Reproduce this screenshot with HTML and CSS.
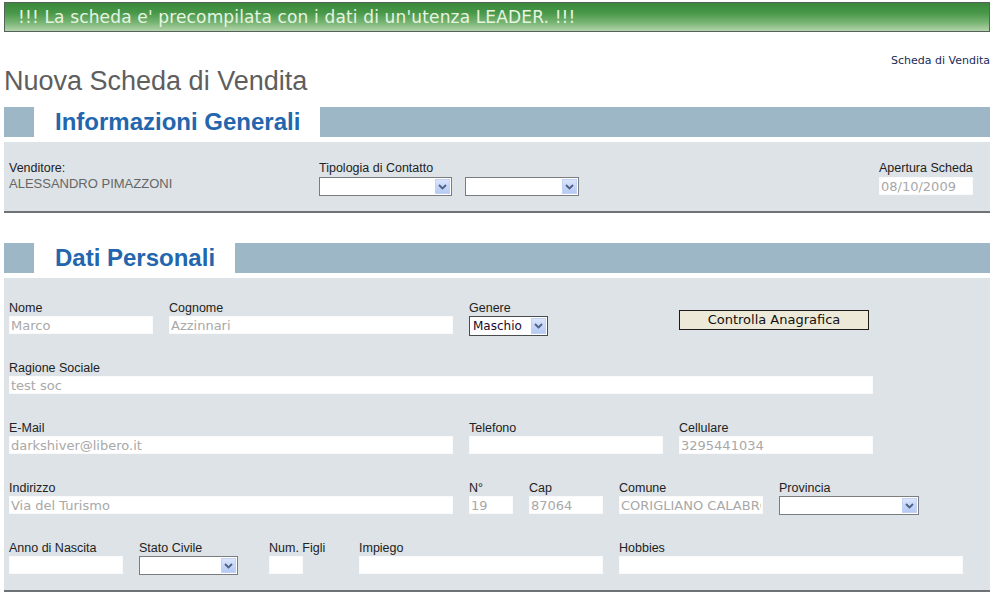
FILE: index.html
```html
<!DOCTYPE html>
<html lang="it">
<head>
<meta charset="utf-8">
<title>Nuova Scheda di Vendita</title>
<link rel="stylesheet" href="styles.css">
</head>
<body>
<div class="page">
  <div class="notice">!!! La scheda e' precompilata con i dati di un'utenza LEADER. !!!</div>
  <div class="crumb"><a class="crumb-link">Scheda di Vendita</a></div>
  <h1 class="page-title">Nuova Scheda di Vendita</h1>

  <section class="section">
    <div class="sec-head"><span class="sec-tab"></span><h2 class="sec-title">Informazioni Generali</h2><span class="sec-fill"></span></div>
    <div class="panel panel-general">
      <div class="gcol gcol-vend">
        <div class="lbl lbl-gen">Venditore:</div>
        <div class="value">ALESSANDRO PIMAZZONI</div>
      </div>
      <div class="gcol gcol-tipo">
        <div class="lbl lbl-gen">Tipologia di Contatto</div>
        <div class="sel-pair">
          <div class="select s132"><span class="sel-val"></span><span class="sel-btn"><svg width="9" height="6" viewBox="0 0 9 6"><path d="M1 1 L4.5 4.5 L8 1" fill="none" stroke="#4d6185" stroke-width="1.8"/></svg></span></div>
          <div class="select s113"><span class="sel-val"></span><span class="sel-btn"><svg width="9" height="6" viewBox="0 0 9 6"><path d="M1 1 L4.5 4.5 L8 1" fill="none" stroke="#4d6185" stroke-width="1.8"/></svg></span></div>
        </div>
      </div>
      <div class="gcol gcol-apert">
        <div class="lbl lbl-gen">Apertura Scheda</div>
        <input class="inp i93" type="text" value="08/10/2009" readonly>
      </div>
    </div>
  </section>

  <section class="section section-2">
    <div class="sec-head"><span class="sec-tab"></span><h2 class="sec-title">Dati Personali</h2><span class="sec-fill"></span></div>
    <div class="panel panel-personal">
      <div class="row">
        <div class="field c160"><div class="lbl">Nome</div><input class="inp i143" type="text" value="Marco" readonly></div>
        <div class="field c300"><div class="lbl">Cognome</div><input class="inp i283" type="text" value="Azzinnari" readonly></div>
        <div class="field c210"><div class="lbl">Genere</div>
          <div class="select select-dark s78"><span class="sel-val">Maschio</span><span class="sel-btn"><svg width="9" height="6" viewBox="0 0 9 6"><path d="M1 1 L4.5 4.5 L8 1" fill="none" stroke="#4d6185" stroke-width="1.8"/></svg></span></div>
        </div>
        <div class="field"><button class="btn" type="button">Controlla Anagrafica</button></div>
      </div>
      <div class="row">
        <div class="field"><div class="lbl">Ragione Sociale</div><input class="inp i863" type="text" value="test soc" readonly></div>
      </div>
      <div class="row">
        <div class="field c460"><div class="lbl">E-Mail</div><input class="inp i443" type="text" value="darkshiver@libero.it" readonly></div>
        <div class="field c210"><div class="lbl">Telefono</div><input class="inp i193" type="text" value="" readonly></div>
        <div class="field"><div class="lbl">Cellulare</div><input class="inp i193" type="text" value="3295441034" readonly></div>
      </div>
      <div class="row">
        <div class="field c460"><div class="lbl">Indirizzo</div><input class="inp i443" type="text" value="Via del Turismo" readonly></div>
        <div class="field c60"><div class="lbl">N°</div><input class="inp i43" type="text" value="19" readonly></div>
        <div class="field c90"><div class="lbl">Cap</div><input class="inp i73" type="text" value="87064" readonly></div>
        <div class="field c160"><div class="lbl">Comune</div><input class="inp i143" type="text" value="CORIGLIANO CALABRO" readonly></div>
        <div class="field"><div class="lbl">Provincia</div>
          <div class="select s139"><span class="sel-val"></span><span class="sel-btn"><svg width="9" height="6" viewBox="0 0 9 6"><path d="M1 1 L4.5 4.5 L8 1" fill="none" stroke="#4d6185" stroke-width="1.8"/></svg></span></div>
        </div>
      </div>
      <div class="row">
        <div class="field c130"><div class="lbl">Anno di Nascita</div><input class="inp i113" type="text" value="" readonly></div>
        <div class="field c130"><div class="lbl">Stato Civile</div>
          <div class="select s98"><span class="sel-val"></span><span class="sel-btn"><svg width="9" height="6" viewBox="0 0 9 6"><path d="M1 1 L4.5 4.5 L8 1" fill="none" stroke="#4d6185" stroke-width="1.8"/></svg></span></div>
        </div>
        <div class="field c90"><div class="lbl">Num. Figli</div><input class="inp i33" type="text" value="" readonly></div>
        <div class="field c260"><div class="lbl">Impiego</div><input class="inp i243" type="text" value="" readonly></div>
        <div class="field"><div class="lbl">Hobbies</div><input class="inp i343" type="text" value="" readonly></div>
      </div>
    </div>
  </section>
</div>
</body>
</html>
```

FILE: styles.css
```css
html, body {
  margin: 0;
  padding: 0;
  background: #ffffff;
}

body {
  font-family: "Liberation Sans", Arial, sans-serif;
  color: #333;
}

.page {
  padding: 2px 4px 0 4px;
}

.notice {
  height: 28px;
  line-height: 28px;
  border: 1px solid #55625a;
  background: linear-gradient(to bottom, #3b873b 0%, #489848 35%, #78b474 70%, #b3d4ab 100%);
  color: #e6f4e2;
  font-family: "DejaVu Sans", Verdana, sans-serif;
  font-size: 17px;
  letter-spacing: 0.15px;
  padding-left: 13px;
  white-space: nowrap;
  overflow: hidden;
}

.crumb {
  margin-top: 20px;
  text-align: right;
  line-height: 14px;
  height: 14px;
}

.crumb-link {
  font-family: "DejaVu Sans", Verdana, sans-serif;
  font-size: 11px;
  color: #172b58;
  text-decoration: none;
}

.page-title {
  margin: 0;
  font-family: "Liberation Sans", Arial, sans-serif;
  font-weight: normal;
  font-size: 27px;
  line-height: 30px;
  color: #5e5e5e;
}

.section {
  margin-top: 11px;
}

.section-2 {
  margin-top: 30px;
}

.sec-head {
  display: flex;
  height: 30px;
}

.sec-tab {
  width: 30px;
  background: #9eb7c7;
}

.sec-title {
  margin: 0;
  padding: 0 20px 0 21px;
  font-family: "Liberation Sans", Arial, sans-serif;
  font-weight: bold;
  font-size: 24px;
  line-height: 30px;
  color: #2366ad;
  white-space: nowrap;
}

.sec-fill {
  flex: 1;
  background: #9eb7c7;
}

.panel {
  margin-top: 5px;
  background: #dde3e7;
  border-bottom: 2px solid #6e7276;
}

/* Informazioni generali */
.panel-general {
  display: flex;
  padding: 19px 0 15px 5px;
}

.gcol-vend {
  width: 310px;
}

.gcol-tipo {
  flex: 1;
}

.gcol-apert {
  width: 111px;
}

.lbl {
  font-size: 12.5px;
  line-height: 14px;
  height: 14px;
  color: #222;
  white-space: nowrap;
  margin-bottom: 1px;
}

.lbl-gen {
  margin-bottom: 2px;
}

.value {
  font-size: 13px;
  line-height: 14px;
  color: #666;
}

.sel-pair {
  display: flex;
  gap: 13px;
}

/* Fake select (XP combo) */
.select {
  box-sizing: border-box;
  height: 19px;
  display: flex;
  justify-content: space-between;
  align-items: stretch;
  background: #fff;
  border: 1px solid #7a7d80;
  padding: 1px;
}

.select-dark {
  border-color: #4a4d50;
  height: 20px;
}

.sel-val {
  font-family: "DejaVu Sans", Verdana, sans-serif;
  font-size: 12px;
  line-height: 16px;
  color: #1a0a2a;
  padding-left: 2px;
}

.sel-btn {
  width: 15px;
  box-sizing: border-box;
  border: 1px solid #c2d2f6;
  background: linear-gradient(to bottom, #dbe5fc 0%, #c3d4f8 60%, #b6caf3 100%);
  display: flex;
  align-items: center;
  justify-content: center;
}

.s78 { width: 79px; }
.s98 { width: 99px; }
.s113 { width: 114px; }
.s132 { width: 133px; }
.s139 { width: 140px; }

/* Inputs */
.inp {
  display: block;
  box-sizing: border-box;
  height: 18px;
  margin: 0;
  border: 1px solid #fafafa;
  background: #fff;
  padding: 0 1px;
  font-family: "DejaVu Sans", Verdana, sans-serif;
  font-size: 13px;
  line-height: 16px;
  color: #a8a8a8;
  outline: none;
}

.i33 { width: 34px; }
.i43 { width: 44px; }
.i73 { width: 74px; }
.i93 { width: 94px; }
.i113 { width: 114px; }
.i143 { width: 144px; }
.i193 { width: 194px; }
.i243 { width: 244px; }
.i283 { width: 284px; }
.i343 { width: 344px; }
.i443 { width: 444px; }
.i863 { width: 864px; }

/* Dati personali */
.panel-personal {
  padding: 23px 0 16px 5px;
}

.row {
  display: flex;
  height: 33px;
}

.row + .row {
  margin-top: 27px;
}

.c60 { width: 60px; }
.c90 { width: 90px; }
.c130 { width: 130px; }
.c160 { width: 160px; }
.c210 { width: 210px; }
.c260 { width: 260px; }
.c300 { width: 300px; }
.c460 { width: 460px; }

.btn {
  margin-top: 9px;
  width: 190px;
  height: 20px;
  padding: 0;
  background: #ece9d8;
  border: 1px solid #1c1c1c;
  border-radius: 0;
  font-family: "DejaVu Sans", Verdana, sans-serif;
  font-size: 13px;
  line-height: 18px;
  color: #111;
}
```
